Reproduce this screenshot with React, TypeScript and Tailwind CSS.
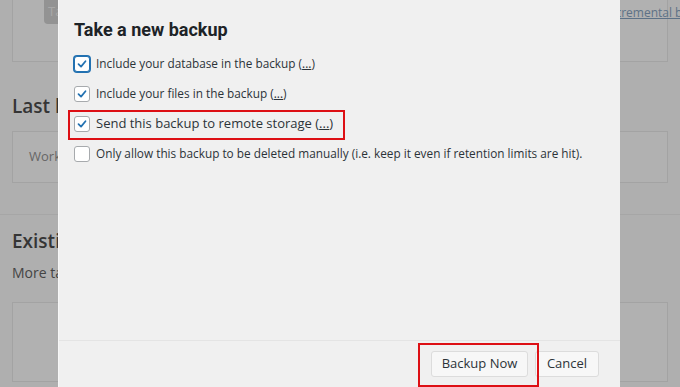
import React from "react";

const font = { fontFamily: "'Open Sans', 'Noto Sans', sans-serif" };

function Check({ checked, focus }: { checked: boolean; focus?: boolean }) {
  return (
    <span
      className={
        "flex h-4 w-4 shrink-0 items-center justify-center rounded-[3px] bg-white " +
        (focus ? "border border-[#2271b1] shadow-[0_0_0_1px_#2271b1]" : "border border-[#a7aaad]")
      }
    >
      {checked && (
        <svg viewBox="0 0 16 16" className="h-4 w-4">
          <path d="M4 8.2 L6.9 11 L12 4.8" fill="none" stroke="#2271b1" strokeWidth="2" strokeLinecap="round" strokeLinejoin="round" />
        </svg>
      )}
    </span>
  );
}

function Row({
  checked,
  focus,
  text,
  link = true,
  big,
}: {
  checked: boolean;
  focus?: boolean;
  text: string;
  link?: boolean;
  big?: boolean;
}) {
  return (
    <div className="flex h-[30px] items-center gap-[6px]">
      <Check checked={checked} focus={focus} />
      <span className={(big ? "text-[13px]" : "text-[11.8px]") + " text-[#2c3338]"}>
        {text}
        {link && (
          <>
            {" ("}
            <span className="underline">...</span>
            {")"}
          </>
        )}
      </span>
    </div>
  );
}

export default function App() {
  return (
    <div className="relative h-[387px] w-[680px] overflow-hidden bg-[#afafaf]" style={font}>
      {/* background page */}
      <div className="flex flex-col px-[12px]">
        <div className="relative h-[62px] border-x border-b border-[#a3a3a3] bg-[#b1b1b1]">
          <div className="absolute left-[31px] top-0 h-[24px] w-[40px] rounded-b-[4px] bg-[#939393] pl-[4px] text-[13px] leading-[22px] text-[#a8a8a8]">
            Ta
          </div>
          <div className="absolute left-[592px] top-[4px] whitespace-nowrap text-[12px] text-[#5d7287] underline">
            incremental backups
          </div>
        </div>
        <div className="mt-[31px] text-[19px] font-semibold leading-[26px] text-[#353535]">Last log message</div>
        <div className="mt-[12px] flex h-[52px] items-center border border-[#a3a3a3] bg-[#b1b1b1] pl-[16px] text-[13px] text-[#666]">
          Working...
        </div>
        <div className="mx-[-12px] mt-[31px] border-t border-[#a6a6a6]" />
        <div className="mt-[13px] text-[19px] font-semibold leading-[26px] text-[#353535]">Existing backups</div>
        <div className="mt-[9px] text-[14px] leading-[20px] text-[#444]">More tasks</div>
        <div className="mt-[19px] h-[80px] border border-[#a3a3a3] bg-[#b1b1b1]" />
      </div>

      {/* modal */}
      <div className="absolute left-[58px] top-0 flex h-[387px] w-[562px] flex-col border-l border-[#f7f7f7] bg-[#f0f0f0]">
        <div className="flex-1 pl-[15px] pt-[16px]">
          <div
            className="text-[18px] font-bold leading-[28px] text-[#1d2327]"
            style={{ fontFamily: "Roboto, 'Open Sans', sans-serif" }}
          >
            Take a new backup
          </div>
          <div className="mt-[5px] flex flex-col">
            <Row checked focus text="Include your database in the backup" />
            <Row checked text="Include your files in the backup" />
            <Row checked big text="Send this backup to remote storage" />
            <Row
              checked={false}
              link={false}
              text="Only allow this backup to be deleted manually (i.e. keep it even if retention limits are hit)."
            />
          </div>
        </div>
        <div className="flex h-[47px] items-start justify-end gap-[7px] border-t border-[#e4e4e4] pr-[21px] pt-[10px]">
          <button className="h-[26px] w-[97px] rounded-[3px] border border-[#dcdcdc] bg-[#f7f7f7] text-[13px] text-[#2c3338]">
            Backup Now
          </button>
          <button className="h-[26px] w-[64px] rounded-[3px] border border-[#dcdcdc] bg-[#f7f7f7] text-[13px] text-[#2c3338]">
            Cancel
          </button>
        </div>
      </div>

      {/* annotation boxes */}
      <div className="absolute left-[68px] top-[110px] h-[30px] w-[277px] border-2 border-[#dd0f14]" />
      <div className="absolute left-[418px] top-[343px] h-[44px] w-[121px] border-2 border-[#dd0f14]" />
    </div>
  );
}
